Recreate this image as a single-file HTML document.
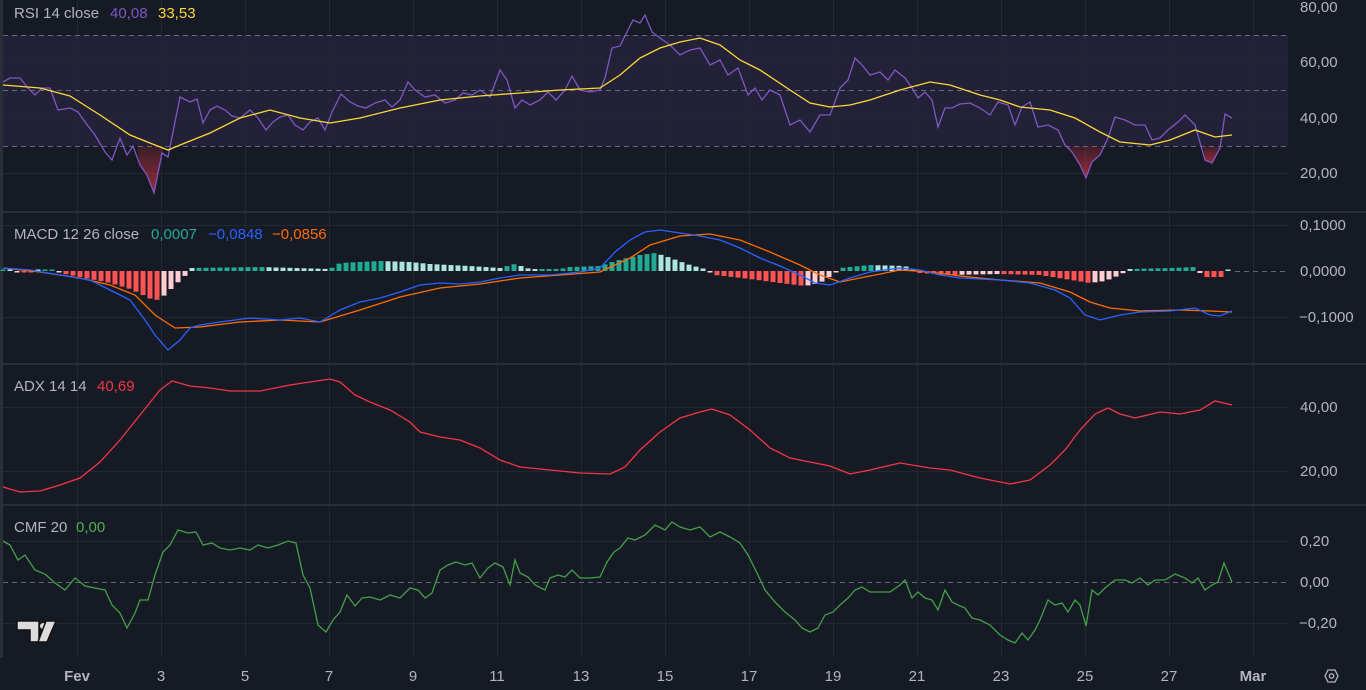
<!DOCTYPE html>
<html><head><meta charset="utf-8">
<style>
html,body{margin:0;padding:0;background:#161a25;overflow:hidden}
svg{display:block}
text{font-family:"Liberation Sans",sans-serif}
</style></head><body>
<svg id="s" width="1366" height="690" xmlns="http://www.w3.org/2000/svg">
<rect width="1366" height="690" fill="#161a25"/>
<rect x="0" y="0" width="3" height="658" fill="#2a2e39"/>
<rect x="3" y="35" width="1285" height="111" fill="#7e57c2" fill-opacity="0.12"/>
<g stroke="#232733" stroke-width="1">
<line x1="3" x2="1288" y1="62.5" y2="62.5"/><line x1="3" x2="1288" y1="118.5" y2="118.5"/><line x1="3" x2="1288" y1="173.5" y2="173.5"/>
<line x1="3" x2="1288" y1="225.5" y2="225.5"/><line x1="3" x2="1288" y1="317.5" y2="317.5"/>
<line x1="3" x2="1288" y1="407.5" y2="407.5"/><line x1="3" x2="1288" y1="471.5" y2="471.5"/>
<line x1="3" x2="1288" y1="541.5" y2="541.5"/><line x1="3" x2="1288" y1="623.5" y2="623.5"/>
<line x1="77.5" x2="77.5" y1="0" y2="658"/><line x1="161.5" x2="161.5" y1="0" y2="658"/><line x1="245.5" x2="245.5" y1="0" y2="658"/><line x1="329.5" x2="329.5" y1="0" y2="658"/><line x1="413.5" x2="413.5" y1="0" y2="658"/><line x1="497.5" x2="497.5" y1="0" y2="658"/><line x1="581.5" x2="581.5" y1="0" y2="658"/><line x1="665.5" x2="665.5" y1="0" y2="658"/><line x1="749.5" x2="749.5" y1="0" y2="658"/><line x1="833.5" x2="833.5" y1="0" y2="658"/><line x1="917.5" x2="917.5" y1="0" y2="658"/><line x1="1001.5" x2="1001.5" y1="0" y2="658"/><line x1="1085.5" x2="1085.5" y1="0" y2="658"/><line x1="1169.5" x2="1169.5" y1="0" y2="658"/><line x1="1253.5" x2="1253.5" y1="0" y2="658"/>
</g>
<g fill="#2a2e39"><rect x="0" y="211" width="1366" height="2"/><rect x="0" y="363" width="1366" height="2"/><rect x="0" y="504" width="1366" height="2"/></g>
<g stroke="#787b86" stroke-width="1" stroke-dasharray="5,4" opacity="0.8">
<line x1="3" x2="1288" y1="35.5" y2="35.5"/><line x1="3" x2="1288" y1="90.5" y2="90.5"/><line x1="3" x2="1288" y1="146.5" y2="146.5"/>
<line x1="1235" x2="1288" y1="271.5" y2="271.5"/>
<line x1="3" x2="1288" y1="582.5" y2="582.5"/>
</g>
<defs><linearGradient id="rg" x1="0" y1="0" x2="0" y2="1"><stop offset="0" stop-color="#f23645" stop-opacity="0.15"/><stop offset="1" stop-color="#f23645" stop-opacity="0.6"/></linearGradient></defs>
<polygon points="137,146 140,165 147,175 154,193 162,153 164,146" fill="url(#rg)"/>
<polygon points="1063,146 1065,145 1072,152 1080,165 1086,178 1092,162 1100,155 1103,146" fill="url(#rg)"/>
<polygon points="1203,146 1205,160 1212,163 1220,148 1221,146" fill="url(#rg)"/>
<polyline fill="none" stroke="#7e57c2" stroke-width="1.3" points="3,82 10,78 20,78 28,88 35,95 42,88 50,88 58,110 70,108 78,112 85,122 95,135 105,152 112,160 120,138 127,155 133,146 140,165 147,175 154,193 162,153 168,157 180,97 190,102 197,99 203,123 210,110 217,106 225,110 232,116 240,118 250,110 258,118 266,130 273,122 280,117 288,115 295,125 303,130 310,122 318,118 325,130 332,112 341,94 350,102 358,106 366,108 375,103 385,100 392,107 400,100 408,82 415,90 425,97 435,95 445,103 455,100 463,93 472,95 480,90 490,97 500,70 507,80 515,108 522,100 530,105 540,100 548,92 556,100 565,90 572,76 580,90 590,92 600,90 605,78 612,48 620,46 628,30 633,20 640,23 645,15 652,32 660,38 670,45 680,55 690,50 700,48 710,65 720,60 728,75 738,68 748,95 755,88 762,100 770,90 780,95 790,125 800,120 810,132 820,115 830,115 840,88 848,80 855,58 862,65 870,75 880,72 888,80 895,70 905,78 912,88 918,98 925,92 932,100 938,127 945,108 952,108 960,104 970,103 980,108 990,115 998,102 1008,105 1015,125 1022,107 1030,102 1038,127 1048,125 1058,130 1065,145 1072,152 1080,165 1086,178 1092,162 1100,155 1108,138 1115,117 1125,120 1135,125 1145,125 1152,140 1160,138 1168,130 1178,122 1185,115 1195,125 1205,160 1212,163 1220,148 1225,114 1232,118"/>
<polyline fill="none" stroke="#fdd835" stroke-width="1.3" points="3,85 40,88 70,96 100,115 130,135 155,145 168,150 185,143 210,133 240,118 270,110 300,118 330,123 360,118 400,108 440,100 480,96 520,93 560,90 600,88 620,75 640,58 660,48 680,42 700,38 720,45 740,60 760,70 790,90 810,103 830,107 850,105 870,100 900,90 930,82 950,85 980,95 1000,100 1020,107 1050,110 1075,118 1100,132 1120,142 1150,145 1170,140 1195,130 1215,137 1232,135"/>
<g id="hist"></g>
<polyline fill="none" stroke="#ff6d00" stroke-width="1.3" points="3,268 40,272 80,278 110,285 135,295 155,315 175,328 200,327 240,322 280,320 320,322 360,310 400,297 440,288 480,284 520,278 560,275 600,272 630,258 650,245 680,236 710,234 740,240 770,252 800,265 820,275 840,282 870,276 900,270 930,272 960,276 1000,280 1040,283 1070,292 1090,302 1110,308 1140,311 1180,310 1210,311 1232,312"/>
<polyline fill="none" stroke="#2962ff" stroke-width="1.3" points="3,268 30,270 60,275 90,280 110,290 130,300 145,320 155,335 168,350 180,340 190,328 200,325 220,322 250,318 280,320 300,318 320,322 340,310 360,302 380,298 400,292 420,285 440,283 460,284 480,282 500,278 520,275 550,275 580,272 600,268 615,252 630,240 645,232 660,230 680,233 700,236 720,240 740,248 760,258 780,266 800,275 815,283 830,285 850,278 870,272 900,268 920,270 940,275 960,278 1000,280 1030,283 1055,290 1070,298 1085,315 1100,320 1120,315 1140,312 1170,311 1195,308 1210,315 1220,316 1232,311"/>
<polyline fill="none" stroke="#f23645" stroke-width="1.3" points="3,487 20,492 40,491 60,485 80,478 100,462 120,440 140,415 160,390 172,381 190,386 210,388 230,391 260,391 290,385 310,382 330,379 340,382 355,395 370,402 390,410 410,422 420,432 440,437 460,440 480,448 500,460 520,467 550,470 580,473 610,474 625,467 640,450 660,432 680,418 700,412 712,409 730,415 750,430 770,448 790,458 810,462 830,466 850,474 870,470 900,463 930,468 950,470 980,478 1010,484 1030,480 1050,465 1065,450 1080,430 1095,414 1108,408 1120,414 1135,418 1160,412 1180,414 1200,410 1215,401 1232,405"/>
<polyline fill="none" stroke="#43a047" stroke-width="1.3" points="3,541 10,545 18,560 25,555 35,570 45,574 55,583 65,590 75,578 85,586 95,588 105,590 112,605 120,613 127,628 135,613 140,600 148,600 155,575 163,552 170,545 178,530 188,533 196,532 203,545 212,543 220,548 230,550 240,548 250,550 258,545 268,548 278,545 288,541 296,543 303,575 310,588 318,625 326,632 333,620 340,612 347,595 355,606 362,598 370,597 380,600 390,595 400,598 410,588 418,590 425,598 432,593 440,570 448,565 456,562 465,565 472,563 480,578 488,568 495,563 503,567 510,585 515,560 520,573 528,577 535,585 545,590 550,578 558,575 565,577 572,570 580,578 590,578 600,577 607,562 614,552 620,548 628,538 635,540 645,535 655,525 665,530 672,522 680,527 690,530 700,527 710,537 720,532 730,537 740,543 748,555 757,573 765,590 775,602 785,612 795,620 802,628 810,632 818,628 825,615 833,612 840,605 848,598 855,590 862,587 870,592 880,592 890,592 900,585 905,580 912,598 918,592 925,598 932,600 938,610 945,590 952,602 958,605 965,608 972,618 980,620 990,625 1000,635 1008,640 1015,643 1022,633 1028,640 1035,630 1040,620 1048,600 1055,605 1062,603 1068,612 1075,600 1080,605 1086,626 1092,590 1098,595 1105,588 1115,580 1125,580 1132,583 1140,578 1148,585 1155,580 1165,580 1175,574 1185,578 1192,583 1198,578 1205,590 1212,585 1218,582 1224,563 1232,582"/>
<g font-size="15">
<text x="14" y="18" fill="#b2b5be">RSI 14 close</text><text x="110" y="18" fill="#7e57c2">40,08</text><text x="158" y="18" fill="#fdd835">33,53</text>
<text x="14" y="239" fill="#b2b5be">MACD 12 26 close</text><text x="151" y="239" fill="#22ab94">0,0007</text><text x="208" y="239" fill="#2962ff">−0,0848</text><text x="272" y="239" fill="#ff6d00">−0,0856</text>
<text x="14" y="391" fill="#b2b5be">ADX 14 14</text><text x="97" y="391" fill="#f23645">40,69</text>
<text x="14" y="532" fill="#b2b5be">CMF 20</text><text x="76" y="532" fill="#4caf50">0,00</text>
</g>
<g font-size="15" fill="#b2b5be">
<text x="1300" y="12">80,00</text><text x="1300" y="67">60,00</text><text x="1300" y="123">40,00</text><text x="1300" y="178">20,00</text>
<text x="1300" y="230">0,1000</text><text x="1300" y="276">0,0000</text><text x="1299" y="322">−0,1000</text>
<text x="1300" y="412">40,00</text><text x="1300" y="476">20,00</text>
<text x="1300" y="546">0,20</text><text x="1300" y="587">0,00</text><text x="1299" y="628">−0,20</text>
</g>
<g font-size="15" fill="#b2b5be" text-anchor="middle">
<text x="77" y="681" font-weight="bold">Fev</text><text x="161" y="681">3</text><text x="245" y="681">5</text><text x="329" y="681">7</text><text x="413" y="681">9</text><text x="497" y="681">11</text><text x="581" y="681">13</text><text x="665" y="681">15</text><text x="749" y="681">17</text><text x="833" y="681">19</text><text x="917" y="681">21</text><text x="1001" y="681">23</text><text x="1085" y="681">25</text><text x="1169" y="681">27</text><text x="1253" y="681" font-weight="bold">Mar</text>
</g>
<polygon points="1325,676 1328,670 1335,670 1338,676 1335,682 1328,682" fill="none" stroke="#b2b5be" stroke-width="1.3"/>
<circle cx="1331.5" cy="676" r="2.2" fill="none" stroke="#b2b5be" stroke-width="1.3"/>
<g>
<path d="M17,621 H39 V642 H30 V630 H17 Z" fill="#dcdcdc" stroke="#111" stroke-width="1.5"/>
<circle cx="43" cy="626" r="3.5" fill="#dcdcdc" stroke="#111" stroke-width="1"/>
<path d="M46,621 H56 L47,642 H38 Z" fill="#dcdcdc" stroke="#111" stroke-width="1.5"/>
</g>
</svg>
<script>
(function(){
var pts=[[3,1],[30,-1],[50,2],[65,-3],[90,-8],[110,-12],[130,-18],[145,-25],[155,-30],[165,-24],[175,-14],[186,-4],[192,3],[260,4],[330,2],[340,8],[380,10],[410,9],[430,7],[470,5],[500,3],[515,7],[530,2],[560,2],[570,4],[600,5],[615,10],[640,16],[655,18],[665,15],[690,6],[705,2],[715,-4],[750,-8],[780,-12],[805,-15],[820,-12],[832,-4],[840,3],[870,6],[905,5],[920,-2],[950,-4],[1000,-3],[1040,-4],[1065,-8],[1090,-12],[1105,-10],[1120,-4],[1130,2],[1170,3],[1195,4],[1200,-2],[1205,-6],[1222,-6],[1230,2]];
function v(x){for(var i=0;i<pts.length-1;i++){if(x>=pts[i][0]&&x<=pts[i+1][0]){var t=(x-pts[i][0])/(pts[i+1][0]-pts[i][0]);return pts[i][1]+t*(pts[i+1][1]-pts[i][1]);}}return 0;}
var g=document.getElementById('hist'),s='',prev=0;
for(var x=3;x<=1232;x+=7){var h=v(x);var growing=Math.abs(h)>=Math.abs(prev);var c;
if(h>=0)c=growing?'#22ab94':'#acE5dc';else c=growing?'#ff5252':'#ffcdd2';
var hh=Math.max(1.5,Math.abs(h));var y=h>=0?271-hh:271;
s+='<rect x="'+(x-2.5)+'" y="'+y+'" width="5" height="'+hh+'" fill="'+c+'"/>';prev=h;}
g.innerHTML=s;})();
</script>
</body></html>
